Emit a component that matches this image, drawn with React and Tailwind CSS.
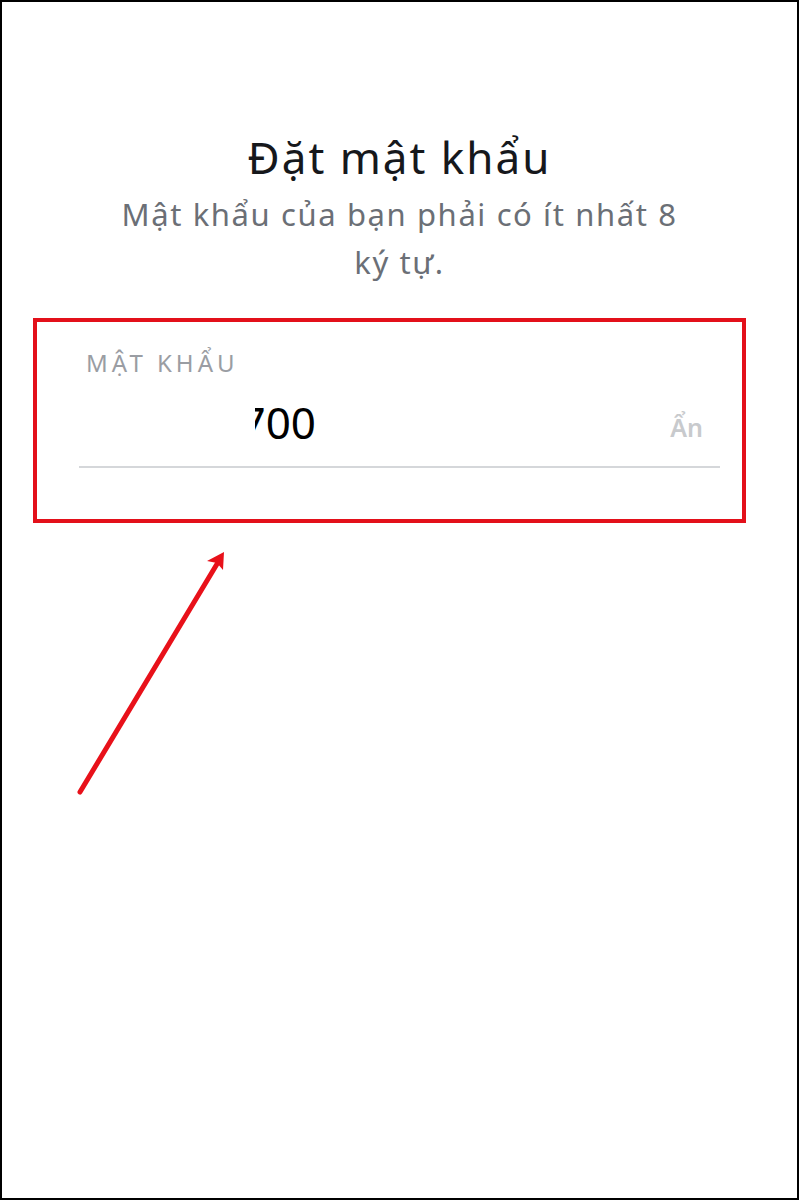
export default function App() {
  return (
    <div
      className="relative w-[799px] h-[1200px] border-2 border-black bg-white overflow-hidden"
      style={{ fontFamily: '"Noto Sans", "Liberation Sans", sans-serif' }}
    >
      <div className="pt-[130px] text-center">
        <h1 className="text-[44px] leading-[50px] tracking-[2px] text-[#16181c]">Đặt mật khẩu</h1>
        <p className="mt-[8px] text-[31px] leading-[48px] tracking-[1.6px] text-[#6b6f76]">
          Mật khẩu của bạn phải có ít nhất 8
          <br />
          ký tự.
        </p>
      </div>

      <div className="mt-[32px] ml-[31px] w-[713px] h-[205px] border-4 border-[#e3101a]">
        <div className="ml-[42px] mr-[22px] pt-[29px]">
          <div className="pl-[7px] text-[24px] leading-[24px] tracking-[4px] text-[#9a9da3]">
            MẬT KHẨU
          </div>
          <div className="mt-[21px] flex items-end justify-between pr-[17px]">
            <div className="ml-[176px] w-[61px] overflow-hidden flex justify-end">
              <span className="text-[44px] leading-[52px] text-black whitespace-nowrap">700</span>
            </div>
            <span className="mb-[6px] text-[25px] leading-[30px] font-semibold text-[#c8cacd]">Ẩn</span>
          </div>
          <div className="mt-[18px] h-[2px] bg-[#d5d7da]" />
        </div>
      </div>

      <svg
        className="absolute left-0 top-0 pointer-events-none"
        width="799"
        height="1200"
        viewBox="0 0 799 1200"
      >
        <line x1="78" y1="790" x2="215" y2="562" stroke="#e8111a" strokeWidth="5" strokeLinecap="round" />
        <polygon points="222,550 205,559 215,561 221,568" fill="#e8111a" />
      </svg>
    </div>
  )
}
